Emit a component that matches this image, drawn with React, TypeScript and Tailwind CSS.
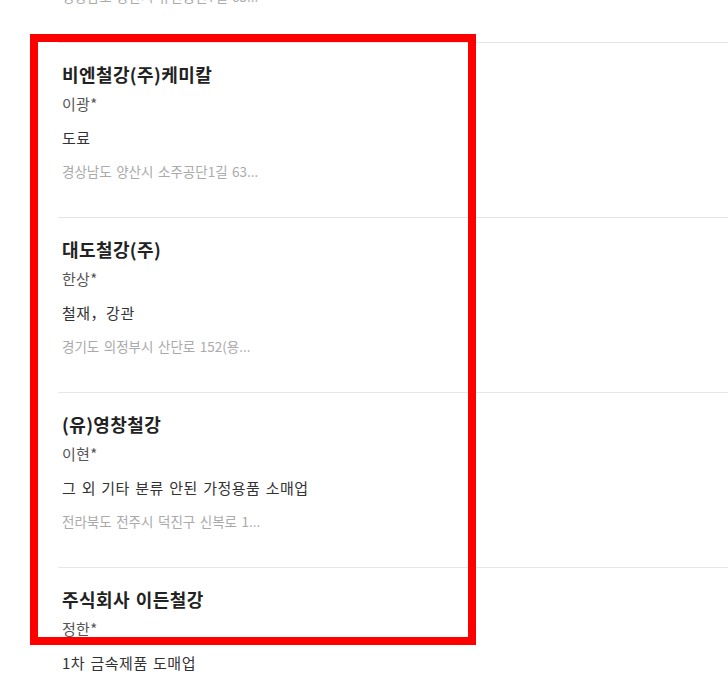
import React from 'react';

interface Company {
  name: string;
  owner: string;
  category: string;
  address: string;
}

const companies: Company[] = [
  {
    name: '(주)대성철강',
    owner: '김성*',
    category: '철강재 도매업',
    address: '경상남도 양산시 유산공단7길 63...',
  },
  {
    name: '비엔철강(주)케미칼',
    owner: '이광*',
    category: '도료',
    address: '경상남도 양산시 소주공단1길 63...',
  },
  {
    name: '대도철강(주)',
    owner: '한상*',
    category: '철재，강관',
    address: '경기도 의정부시 산단로 152(용...',
  },
  {
    name: '(유)영창철강',
    owner: '이현*',
    category: '그 외 기타 분류 안된 가정용품 소매업',
    address: '전라북도 전주시 덕진구 신복로 1...',
  },
  {
    name: '주식회사 이든철강',
    owner: '정한*',
    category: '1차 금속제품 도매업',
    address: '경기도 김포시 대곶면 대곶로 1...',
  },
];

function CompanyRow({ company }: { company: Company }) {
  return (
    <li className="h-[175px] border-t border-[#e6e6e6] pl-1 pt-5 [word-spacing:1.5px]">
      <h3 className="text-[18px] font-bold leading-[22px] tracking-[0.4px] text-[#222]">
        {company.name}
      </h3>
      <p className="mt-[9px] text-[15px] leading-5 tracking-[0.3px] text-[#555]">{company.owner}</p>
      <p className="mt-[14px] text-[15px] leading-5 tracking-[0.5px] text-[#333]">{company.category}</p>
      <p className="mt-[14px] text-[13.5px] leading-[18px] text-[#aaa]">{company.address}</p>
    </li>
  );
}

export default function App() {
  return (
    <div
      className="relative h-[678px] w-full overflow-hidden bg-white"
      style={{ fontFamily: '"Noto Sans CJK KR", "Noto Sans", sans-serif' }}
    >
      <ul className="-mt-[133px] ml-[58px]">
        {companies.map(c => (
          <CompanyRow key={c.name} company={c} />
        ))}
      </ul>

      {/* Highlight annotation */}
      <div className="pointer-events-none absolute left-[30px] top-[34px] h-[611px] w-[446px] border-[8px] border-[#ff0000]" />
    </div>
  );
}
